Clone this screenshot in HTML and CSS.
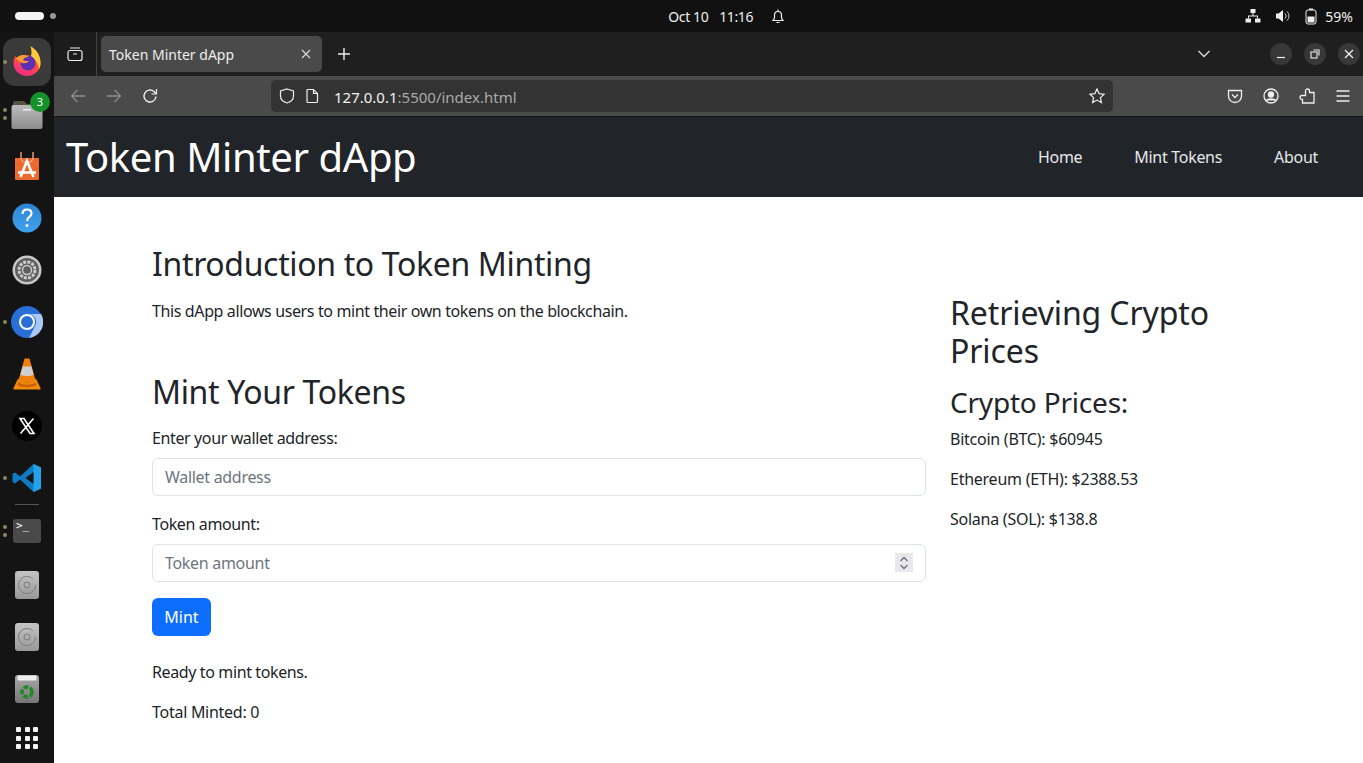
FILE: index.html
```html
<!DOCTYPE html>
<html>
<head>
	<title>Token Minter dApp</title>
	<meta charset="UTF-8">
	<link rel="stylesheet" href="styles.css">
</head>
<body>
<div class="topbar">
	<div class="workspaces"><span class="ws-pill"></span><span class="ws-dot"></span></div>
	<div class="clock">
		<span>Oct 10</span><span>11:16</span>
		<svg width="16" height="16" viewBox="0 0 16 16" fill="none" stroke="#eee" stroke-width="1.2"><path d="M3 12.5h10l-1.5-2.5V7a3.5 3.5 0 0 0-7 0v3z"/><path d="M6.5 14.5h3M8 1.5v2"/></svg>
	</div>
	<div class="tray">
		<svg width="16" height="16" viewBox="0 0 16 16" fill="#eee"><rect x="5.5" y="1" width="5" height="4" rx=".5"/><rect y="10.5" width="5.5" height="4" rx=".5" x="0.5"/><rect x="10" y="10.5" width="5.5" height="4" rx=".5"/><path d="M7.5 5h1v2.500h4.500v3h-1V8.500H4v2H3v-3h4.500z"/></svg>
		<svg width="16" height="16" viewBox="0 0 16 16" fill="#eee"><path d="M1 5.500h2.500L8 2v12L3.500 10.500H1z"/><path d="M10 5.500a3.500 3.500 0 0 1 0 5M12 3.500a6 6 0 0 1 0 9" fill="none" stroke="#ccc" stroke-width="1"/></svg>
		<svg width="12" height="17" viewBox="0 0 12 17" fill="none"><rect x="1" y="2" width="10" height="14" rx="2" stroke="#eee"/><rect x="4" y="0.500" width="4" height="1.500" fill="#eee"/><rect x="2.500" y="8.500" width="7" height="6" fill="#eee"/></svg>
		<span class="battery">59%</span>
	</div>
</div>

<div class="desktop">
	<div class="dock">
		<div class="dock-item dock-active">
			<span class="run-dot"></span>
			<svg width="30" height="32" viewBox="0 0 30 32"><defs><linearGradient id="fx" x1="0.700" y1="0" x2="0.300" y2="1"><stop offset="0" stop-color="#ffa726"/><stop offset=".5" stop-color="#ff4f3a"/><stop offset="1" stop-color="#ee2a8a"/></linearGradient></defs><path d="M15 30C7.500 30 1.500 24.500 1.500 17c0-2.500.7-5 2-7 .6 1 1.500 2 2.500 2.500C7.500 10 11 8.500 13.500 9c1.500-.3 4 0 5.500 1.500C20 7 20 4 18.500 .5c5 2.500 10 8 10 16.500 0 7.500-6 13-13.500 13z" fill="url(#fx)"/><path d="M18.500 .5c5 2.500 10 8 10 16.500 0 2.500-.7 4.500-1.500 6.500-.2-5.500-3.500-10.500-8-13 1-3 1-7-.5-10z" fill="#ffc83a"/><circle cx="16" cy="17" r="7.500" fill="#5d2fb3"/><path d="M4 12.500c3-3.500 8-5 13-1.500-3-.3-5 1-6 3 2 1.500 4 .5 6 1.500-3.500 2.500-8 2-10-.5-1.500-.7-2.500-1.500-3-2.500z" fill="#ff9b2a"/></svg>
		</div>
		<div class="dock-item">
			<span class="run-dot dot-a"></span><span class="run-dot dot-b"></span>
			<svg width="32" height="32" viewBox="0 0 32 32"><path d="M2 5a2 2 0 0 1 2-2h9l3 3h12a2 2 0 0 1 2 2v4H2z" fill="#55533f"/><rect x="1.500" y="7" width="31" height="24" rx="2" fill="url(#fold)" transform="translate(-1 0)"/><defs><linearGradient id="fold" x1="0" y1="0" x2="0" y2="1"><stop offset="0" stop-color="#bbb"/><stop offset="1" stop-color="#8d8d8d"/></linearGradient></defs><rect x="12" y="11" width="8" height="1.500" fill="#eee"/></svg>
			<span class="badge">3</span>
		</div>
		<div class="dock-item">
			<svg width="26" height="30" viewBox="0 0 26 30"><path d="M1 7h24v21a1 1 0 0 1-1 1H2a1 1 0 0 1-1-1z" fill="#ec6a2e"/><path d="M7 7v-6M19 7v-6M7 7c0 6 12 6 12 0" fill="none" stroke="#f4a27c" stroke-width="1.400"/><path d="M6.500 26l6.500-16 6.500 16M4 21.500h18" fill="none" stroke="#fff" stroke-width="2.600"/></svg>
		</div>
		<div class="dock-item">
			<svg width="30" height="30" viewBox="0 0 30 30"><defs><linearGradient id="hp" x1="0" y1="0" x2="0" y2="1"><stop offset="0" stop-color="#2c84d4"/><stop offset="1" stop-color="#3fa3ec"/></linearGradient></defs><circle cx="15" cy="15" r="14.500" fill="url(#hp)"/><path d="M10.500 11c0-3 2-4.500 4.500-4.500s4.500 1.500 4.500 4c0 3.500-4.500 3.500-4.500 7.500" fill="none" stroke="#fff" stroke-width="2.200"/><circle cx="15" cy="22.500" r="1.500" fill="#fff"/></svg>
		</div>
		<div class="dock-item">
			<svg width="30" height="30" viewBox="0 0 30 30" fill="none"><circle cx="15" cy="15" r="14.500" fill="#c9c9c9"/><circle cx="15" cy="15" r="12" fill="#5e5e5e"/><circle cx="15" cy="15" r="8" stroke="#ccc" stroke-width="3" stroke-dasharray="3 1.200"/><circle cx="15" cy="15" r="4.500" stroke="#ccc" stroke-width="1.500"/></svg>
		</div>
		<div class="dock-item">
			<span class="run-dot"></span>
			<svg width="32" height="32" viewBox="0 0 32 32"><circle cx="16" cy="16" r="16" fill="#2a6fd8"/><path d="M16 8h14a16 16 0 0 1-12 24l6-12a8 8 0 0 0-8-12z" fill="#a9c8f5"/><circle cx="16" cy="16" r="8" fill="#fff"/><circle cx="16" cy="16" r="6" fill="#2a6fd8"/></svg>
		</div>
		<div class="dock-item">
			<svg width="28" height="32" viewBox="0 0 28 32"><path d="M11.500 .5h5L23 24H5z" fill="#f07f0c"/><path d="M9.600 8.500h8.800l2.200 8c-3 2-10.200 2-13.200 0z" fill="#cfcfcf"/><path d="M5 20.500L.5 30v1.500h27V30L23 20.500c-3 5-15 5-18 0z" fill="#f08a0a"/><path d="M5.500 24c3 3.500 14 3.500 17 0l1 3c-3 2.500-16 2.500-19 0z" fill="#c95f06"/></svg>
		</div>
		<div class="dock-item">
			<svg width="30" height="30" viewBox="0 0 30 30"><circle cx="15" cy="15" r="15" fill="#000"/><path d="M8 7.500h4l10 15h-4zM21.500 7.500L8.500 22.500" fill="none" stroke="#fff" stroke-width="1.600"/></svg>
		</div>
		<div class="dock-item">
			<span class="run-dot"></span>
			<svg width="30" height="30" viewBox="0 0 30 30"><path d="M21.500 1L29 4.500v21L21.500 29 8 16.500 3 20.500 .5 19V11L3 9.500l5 4z" fill="#0e7cc4"/><path d="M21.500 1L29 4.500v21L21.500 29z" fill="#24a2ee"/><path d="M21.500 9l-8 6 8 6z" fill="#161616"/></svg>
		</div>
		<div class="dock-sep"></div>
		<div class="dock-item">
			<span class="run-dot dot-a"></span><span class="run-dot dot-b"></span>
			<div class="term">&gt;_</div>
		</div>
		<div class="dock-item dock-disk">
			<svg width="26" height="30" viewBox="0 0 26 30"><defs><linearGradient id="dk" x1="0" y1="0" x2="0" y2="1"><stop offset="0" stop-color="#c4c4c4"/><stop offset="1" stop-color="#989898"/></linearGradient><g id="disk"><rect x="1" y="1" width="24" height="28" rx="3" fill="url(#dk)"/><path d="M19 9a8.500 8.500 0 1 0 2.500 6" fill="none" stroke="#7c7c7c"/><circle cx="13" cy="15" r="3" fill="none" stroke="#7c7c7c"/></g></defs><use href="#disk"/></svg>
		</div>
		<div class="dock-item">
			<svg width="26" height="30" viewBox="0 0 26 30"><use href="#disk"/></svg>
		</div>
		<div class="dock-item">
			<svg width="26" height="30" viewBox="0 0 26 30"><defs><linearGradient id="tr" x1="0" y1="0" x2="0" y2="1"><stop offset="0" stop-color="#a8a8a8"/><stop offset="1" stop-color="#777"/></linearGradient></defs><rect x="1" y="1" width="24" height="28" rx="3" fill="url(#tr)"/><rect x="3.500" y="1.500" width="19" height="5" rx="1" fill="#eee"/><circle cx="13" cy="18" r="5" fill="none" stroke="#1f8a24" stroke-width="3.500" stroke-dasharray="5 1.500"/></svg>
		</div>
		<div class="dock-grid">
			<i></i><i></i><i></i><i></i><i></i><i></i><i></i><i></i><i></i>
		</div>
	</div>

	<div class="browser">
		<div class="tabbar">
			<div class="tab-view">
				<svg width="16" height="16" viewBox="0 0 16 16" fill="none" stroke="#eee" stroke-width="1.200"><rect x="1" y="4.500" width="14" height="10" rx="2"/><path d="M3 2h10M6 8h4"/></svg>
			</div>
			<div class="tab">
				<span class="tab-title">Token Minter dApp</span>
				<svg width="10" height="10" viewBox="0 0 10 10" stroke="#ddd" stroke-width="1.100"><path d="M1 1l8 8M9 1L1 9"/></svg>
			</div>
			<svg class="tab-new" width="14" height="14" viewBox="0 0 14 14" stroke="#eee" stroke-width="1.400"><path d="M7 1v12M1 7h12"/></svg>
			<svg class="tab-list" width="14" height="8" viewBox="0 0 14 8" fill="none" stroke="#ddd" stroke-width="1.300"><path d="M1.500 1l5.500 5.500L12.500 1"/></svg>
			<div class="win-btns">
				<span class="win-btn"><svg width="10" height="10" viewBox="0 0 10 10" stroke="#eee" stroke-width="1.200"><path d="M1 8.500h8"/></svg></span>
				<span class="win-btn"><svg width="10" height="10" viewBox="0 0 10 10" fill="none" stroke="#eee" stroke-width="1.100"><rect x="1" y="3" width="6" height="6"/><path d="M3.500 1h5.500v5.500"/></svg></span>
				<span class="win-btn"><svg width="10" height="10" viewBox="0 0 10 10" stroke="#eee" stroke-width="1.300"><path d="M1 1l8 8M9 1L1 9"/></svg></span>
			</div>
		</div>
		<div class="toolbar">
			<svg class="nav-icon" width="16" height="16" viewBox="0 0 16 16" fill="none" stroke="#8c8c8c" stroke-width="1.300"><path d="M15 8H1.500M7.500 2L1.500 8l6 6"/></svg>
			<svg class="nav-icon" width="16" height="16" viewBox="0 0 16 16" fill="none" stroke="#8c8c8c" stroke-width="1.300"><path d="M1 8h13.500M8.500 2l6 6-6 6"/></svg>
			<svg class="nav-icon" width="16" height="16" viewBox="0 0 16 16" fill="none" stroke="#f0f0f0" stroke-width="1.400"><path d="M14 8.500A6 6 0 1 1 12 3.500L14 5.500"/><path d="M14.500 1v5h-5" stroke-width="1.200"/></svg>
			<div class="urlbar">
				<svg width="16" height="16" viewBox="0 0 16 16" fill="none" stroke="#eee" stroke-width="1.200"><path d="M8 1l6.500 2v5c0 3.500-3 6-6.500 7-3.500-1-6.500-3.500-6.500-7V3z"/></svg>
				<svg width="14" height="16" viewBox="0 0 14 16" fill="none" stroke="#eee" stroke-width="1.200"><path d="M2 2.500a1 1 0 0 1 1-1h5.500l4 4v8a1 1 0 0 1-1 1H3a1 1 0 0 1-1-1z"/><path d="M8.500 1.500v4h4"/></svg>
				<span class="url"><b>127.0.0.1</b>:5500/index.html</span>
				<svg class="url-star" width="16" height="16" viewBox="0 0 16 16" fill="none" stroke="#eee" stroke-width="1.200"><path d="M8 1l2.100 4.600 5 .6-3.700 3.400 1 5L8 12.100 3.600 14.600l1-5L.9 6.200l5-.6z"/></svg>
			</div>
			<div class="tool-right">
				<svg width="16" height="16" viewBox="0 0 16 16" fill="none" stroke="#eee" stroke-width="1.300"><path d="M1.500 2.500h13V8a6.500 6.500 0 0 1-13 0z"/><path d="M5 6.500l3 3 3-3"/></svg>
				<svg width="16" height="16" viewBox="0 0 16 16" fill="none" stroke="#eee" stroke-width="1.300"><circle cx="8" cy="8" r="7"/><circle cx="8" cy="6.500" r="2.500" fill="#eee"/><path d="M3.500 12.500c1-2 8-2 9 0" fill="#eee"/></svg>
				<svg width="16" height="16" viewBox="0 0 16 16" fill="none" stroke="#eee" stroke-width="1.300"><path d="M6.500 4.500V3a2 2 0 0 1 4 0v1.500h4.500V15H3.500v-3.500H3a2 2 0 0 1 0-4h3.500v-3z"/></svg>
				<svg width="16" height="16" viewBox="0 0 16 16" stroke="#eee" stroke-width="1.300"><path d="M1.500 3h13M1.500 8h13M1.500 13h13"/></svg>
			</div>
		</div>

		<div class="page">
			<nav class="navbar">
				<span class="brand">Token Minter dApp</span>
				<div class="nav-links">
					<a href="#">Home</a>
					<a href="#">Mint Tokens</a>
					<a href="#">About</a>
				</div>
			</nav>
			<div class="content">
				<div class="col-main">
					<h2>Introduction to Token Minting</h2>
					<p>This dApp allows users to mint their own tokens on the blockchain.</p>
					<h2 class="mint-title">Mint Your Tokens</h2>
					<label>Enter your wallet address:</label>
					<input class="field" type="text" placeholder="Wallet address">
					<label>Token amount:</label>
					<div class="field number-field">
						<span>Token amount</span>
						<span class="spinner"><svg width="10" height="16" viewBox="0 0 10 16" fill="none" stroke="#6f6f78" stroke-width="1.300"><path d="M1.500 6L5 2.500 8.500 6M1.500 10L5 13.500 8.500 10"/></svg></span>
					</div>
					<button class="mint-btn" type="button">Mint</button>
					<p>Ready to mint tokens.</p>
					<p class="total">Total Minted: 0</p>
				</div>
				<div class="col-side">
					<h2>Retrieving Crypto Prices</h2>
					<h3>Crypto Prices:</h3>
					<p>Bitcoin (BTC): $60945</p>
					<p>Ethereum (ETH): $2388.53</p>
					<p>Solana (SOL): $138.8</p>
				</div>
			</div>
		</div>
	</div>
</div>
</body>
</html>
```

FILE: styles.css
```css
*{
	box-sizing:border-box;
}
html,body{
	margin:0;
	height:763px;
	overflow:hidden;
}
body{
	font-family:"Noto Sans","Liberation Sans",sans-serif;
	background-color:#111;
	color:#212529;
	font-size:16px;
}
svg{
	display:block;
	flex-shrink:0;
}

/* system bar */
.topbar{
	height:32px;
	background-color:#111;
	color:#eee;
	display:flex;
	align-items:center;
	justify-content:space-between;
	font-size:14px;
	padding:0 10px 0 15px;
}
.workspaces{
	display:flex;
	align-items:center;
	gap:6px;
}
.ws-pill{
	width:29px;
	height:8px;
	border-radius:4px;
	background-color:#f4f4f4;
}
.ws-dot{
	width:6px;
	height:6px;
	border-radius:50%;
	background-color:#999;
}
.clock{
	display:flex;
	align-items:center;
	gap:11px;
	margin-left:153px;
	letter-spacing:-0.4px;
}
.clock svg{
	margin-left:6px;
}
.tray{
	display:flex;
	align-items:center;
	gap:14px;
}
.battery{
	margin-left:-6px;
}

/* dock */
.desktop{
	display:flex;
	height:731px;
}
.dock{
	width:54px;
	flex-shrink:0;
	background-color:#141414;
	padding-top:4px;
	display:flex;
	flex-direction:column;
	align-items:center;
}
.dock-item{
	width:48px;
	height:52px;
	flex-shrink:0;
	display:flex;
	align-items:center;
	justify-content:center;
	position:relative;
}
.dock-active{
	height:48px;
	margin:2px 0;
	background-color:#3a3a3a;
	border-radius:12px;
}
.run-dot{
	position:absolute;
	left:-0.500px;
	top:50%;
	margin-top:-2px;
	width:4px;
	height:4px;
	border-radius:50%;
	background-color:#8a8a60;
}
.dock-active .run-dot{
	left:0;
}
.dot-a{
	margin-top:-6px;
}
.dot-b{
	margin-top:2px;
}
.badge{
	position:absolute;
	top:4px;
	right:1px;
	width:20px;
	height:20px;
	border-radius:50%;
	background-color:#15912a;
	color:#fff;
	font-size:11px;
	line-height:20px;
	text-align:center;
}
.dock-sep{
	width:24px;
	height:1px;
	background-color:#555;
	flex-shrink:0;
}
.term{
	width:28px;
	height:24px;
	background-color:#4a4a4a;
	border-radius:3px;
	color:#fff;
	font-size:11px;
	line-height:13px;
	padding-left:3px;
	font-family:"DejaVu Sans Mono",monospace;
}
.dock-disk{
	margin-top:2px;
}
.dock-grid{
	display:grid;
	grid-template-columns:repeat(3,5px);
	gap:3.500px;
	margin-top:12px;
}
.dock-grid i{
	width:5px;
	height:5px;
	background-color:#f4f4f4;
	border-radius:1px;
}

/* browser */
.browser{
	flex:1;
	min-width:0;
	display:flex;
	flex-direction:column;
}
.tabbar{
	height:44px;
	background-color:#1f1f1f;
	display:flex;
	align-items:center;
	padding-right:3px;
}
.tab-view{
	width:43px;
	height:100%;
	border-right:1px solid #444;
	display:flex;
	align-items:center;
	justify-content:center;
	background-color:#1c1c1c;
}
.tab{
	width:221px;
	height:36px;
	margin-left:4px;
	background-color:#4a4a4a;
	border-radius:5px;
	display:flex;
	align-items:center;
	justify-content:space-between;
	padding:0 11px 0 8px;
	color:#eee;
	font-size:14px;
}
.tab-new{
	margin-left:15px;
}
.tab-list{
	margin-left:auto;
}
.win-btns{
	display:flex;
	gap:12px;
	margin-left:59px;
}
.win-btn{
	width:22px;
	height:22px;
	border-radius:50%;
	background-color:#383838;
	display:flex;
	align-items:center;
	justify-content:center;
}
.toolbar{
	height:40px;
	background-color:#4a4a4a;
	display:flex;
	align-items:center;
	padding:0 12px 0 16px;
}
.nav-icon{
	margin-right:20px;
}
.urlbar{
	width:842px;
	height:32px;
	margin-left:93px;
	background-color:#333;
	border-radius:5px;
	display:flex;
	align-items:center;
	gap:10px;
	padding:0 8px;
	color:#aaa;
	font-size:15px;
}
.url{
	margin:1px 0 0 5px;
}
.url b{
	font-weight:normal;
	color:#f2f2f2;
}
.url-star{
	margin-left:auto;
}
.tool-right{
	display:flex;
	align-items:center;
	gap:20px;
	margin-left:auto;
}

/* page */
.page{
	flex:1;
	min-height:0;
	background-color:#fff;
}
.navbar{
	height:81px;
	background-color:#212529;
	border-top:1px solid #16191c;
	display:flex;
	align-items:center;
	justify-content:space-between;
	padding:0 45px 0 12px;
}
.brand{
	color:#fff;
	font-size:40px;
	line-height:48px;
	letter-spacing:-0.41px;
}
.nav-links{
	display:flex;
	gap:52px;
	letter-spacing:-0.3px;
}
.nav-links a{
	color:#e7e8e9;
	text-decoration:none;
}
.content{
	display:flex;
	gap:24px;
	padding:48px 0 0 98px;
}
.col-main{
	width:774px;
	letter-spacing:-0.38px;
}
.col-side{
	width:300px;
	padding-top:49px;
	letter-spacing:-0.25px;
}
h2{
	font-size:32px;
	line-height:38.4px;
	font-weight:normal;
	margin:0 0 16px;
	letter-spacing:-0.35px;
}
h3{
	font-size:28px;
	line-height:33.6px;
	font-weight:normal;
	margin:0 0 8px;
	letter-spacing:-0.2px;
}
p{
	margin:0 0 16px;
	line-height:24px;
}
.col-side h2{
	letter-spacing:-0.12px;
	margin-bottom:15px;
}
.total{
	letter-spacing:-0.27px;
}
.mint-title{
	margin-top:50px;
	margin-bottom:14px;
}
label{
	display:block;
	line-height:24px;
	margin-bottom:8px;
}
.field{
	display:block;
	width:100%;
	height:38px;
	border:1px solid #dee2e6;
	border-radius:6px;
	padding:0 12px;
	margin-bottom:16px;
	font:inherit;
	letter-spacing:-0.3px;
	color:#212529;
	background-color:#fff;
}
.field::placeholder{
	color:#6c757d;
}
.number-field{
	display:flex;
	align-items:center;
	justify-content:space-between;
	color:#6c757d;
	padding-right:12px;
}
.spinner{
	width:18px;
	height:19px;
	background-color:#e8e8ed;
	display:flex;
	align-items:center;
	justify-content:center;
}
.mint-btn{
	display:block;
	width:59px;
	height:38px;
	border:none;
	border-radius:6px;
	background-color:#0d6efd;
	color:#fff;
	font:inherit;
	padding:0;
	margin-bottom:24px;
}
```
